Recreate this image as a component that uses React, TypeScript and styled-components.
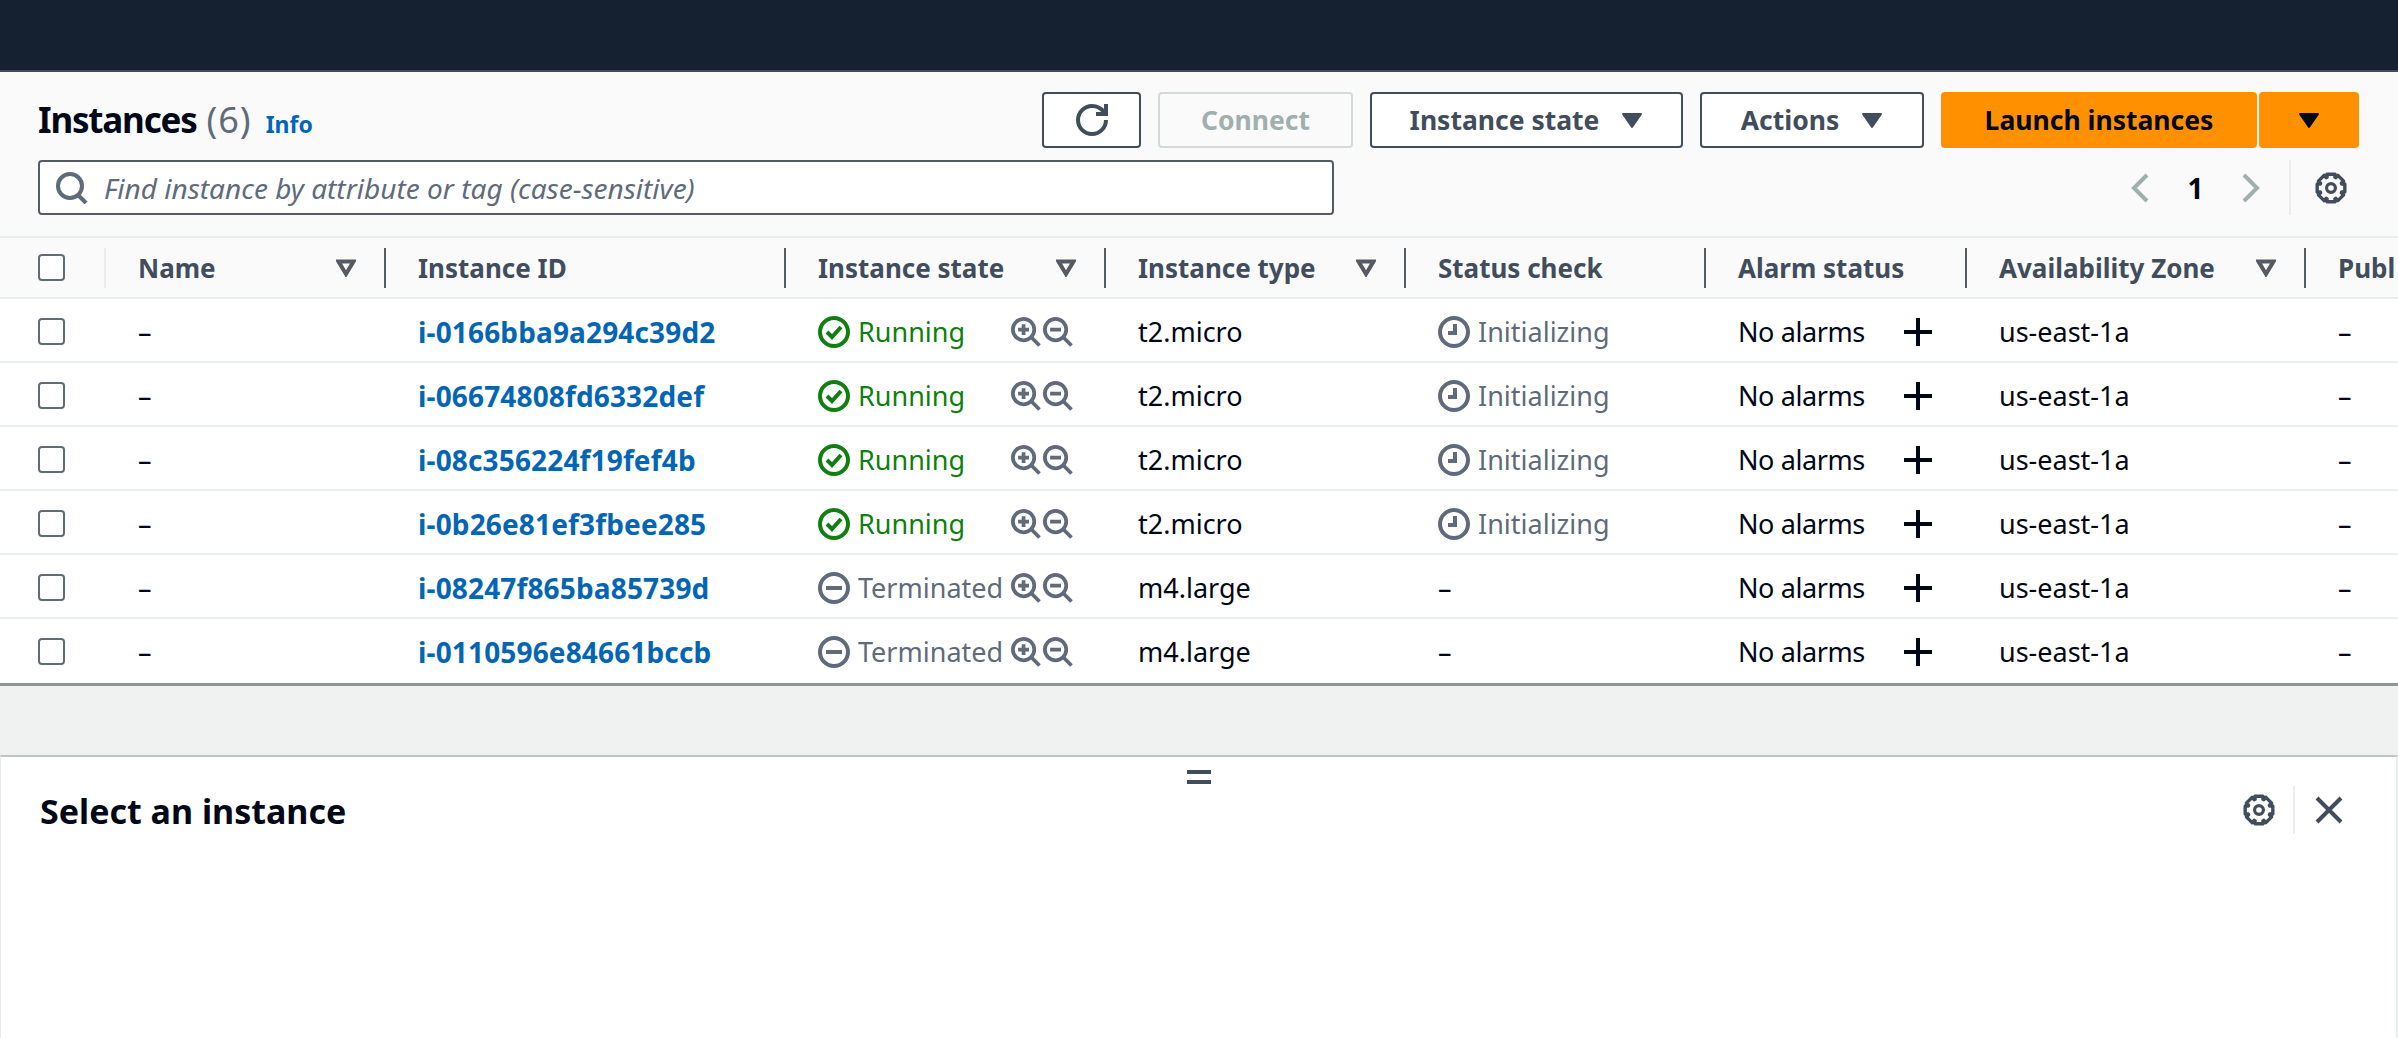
import styled, { createGlobalStyle } from "styled-components";
import { Fragment } from "react";

const GlobalStyle = createGlobalStyle`
  * {
    box-sizing: border-box;
  }
  html,
  body {
    margin: 0;
    padding: 0;
    background: #ffffff;
  }
  body {
    font-family: "Noto Sans", "Open Sans", sans-serif;
    color: #000716;
  }
`;

const COLUMNS = "104px 280px 400px 320px 300px 300px 261px 339px 94px";

const Page = styled.div`
  width: 2398px;
  height: 1038px;
  overflow: hidden;
  display: flex;
  flex-direction: column;
`;

const TopBar = styled.div`
  height: 72px;
  flex: none;
  background: #152131;
  border-bottom: 2px solid #414d5c;
`;

const Header = styled.div`
  height: 166px;
  flex: none;
  background: #fafafa;
  border-bottom: 2px solid #e9eded;
  padding: 20px 38px 0 38px;
  display: flex;
  flex-direction: column;
  gap: 12px;
`;

const HeaderRow = styled.div`
  display: flex;
  align-items: center;
  justify-content: space-between;
  height: 56px;
`;

const TitleGroup = styled.div`
  display: flex;
  align-items: baseline;
  gap: 14px;
`;

const Title = styled.h1`
  margin: 0;
  font-size: 35px;
  line-height: 50px;
  letter-spacing: -1.2px;
  font-weight: 700;
  color: #000716;
`;

const Count = styled.span`
  font-size: 36px;
  letter-spacing: 1px;
  margin-left: 2px;
  font-weight: 400;
  color: #5f6b7a;
`;

const InfoLink = styled.a`
  font-size: 23px;
  font-weight: 700;
  color: #0565b5;
`;

const Actions = styled.div`
  display: flex;
  gap: 17px;
  margin-right: 1px;
`;

const SplitButton = styled.div`
  display: flex;
  gap: 2px;
`;

const Button = styled.button<{ $width: number; $variant?: "primary" | "disabled" }>`
  width: ${(p) => p.$width}px;
  height: 56px;
  padding: 0;
  display: flex;
  align-items: center;
  justify-content: center;
  gap: 22px;
  border-radius: 4px;
  font-family: inherit;
  font-size: 26.5px;
  font-weight: 700;
  background: ${(p) => (p.$variant === "primary" ? "#ff9100" : p.$variant === "disabled" ? "#fafafa" : "#ffffff")};
  color: ${(p) => (p.$variant === "primary" ? "#000716" : p.$variant === "disabled" ? "#9fb0ae" : "#414d5c")};
  border: ${(p) => (p.$variant === "primary" ? "none" : p.$variant === "disabled" ? "2px solid #d3dad8" : "2px solid #414d5c")};
`;

const SearchRow = styled.div`
  display: flex;
  align-items: center;
  justify-content: space-between;
`;

const SearchBox = styled.div`
  width: 1296px;
  height: 55px;
  display: flex;
  align-items: center;
  gap: 16px;
  padding-left: 16px;
  background: #ffffff;
  border: 2px solid #545b64;
  border-radius: 4px;
  font-size: 28px;
  font-style: italic;
  color: #5f6b7a;
`;

const Pagination = styled.div`
  display: flex;
  align-items: center;
  height: 55px;
  margin-right: 13px;
  color: #414d5c;
`;

const PageNumber = styled.span`
  width: 91px;
  text-align: center;
  font-size: 28px;
  font-weight: 700;
  color: #000716;
`;

const PagerDivider = styled.div`
  width: 2px;
  height: 55px;
  background: #e9eded;
  margin: 0 24px 0 28px;
`;

const TableGrid = styled.div`
  flex: none;
  border-bottom: 3px solid #8d9596;
`;

const HeadRow = styled.div`
  display: grid;
  grid-template-columns: ${COLUMNS};
  height: 61px;
  align-items: center;
  background: #fafafa;
  border-bottom: 2px solid #e9eded;
`;

const CheckCell = styled.div`
  padding-left: 38px;
  display: flex;
  align-items: center;
`;

const Checkbox = styled.span`
  display: block;
  width: 27px;
  height: 27px;
  background: #ffffff;
  border: 2px solid #5f6b7a;
  border-radius: 4px;
`;

const HeadCell = styled.div<{ $light?: boolean }>`
  height: 40px;
  display: flex;
  align-items: center;
  justify-content: space-between;
  padding: 0 28px 0 32px;
  border-left: 2px solid ${(p) => (p.$light ? "#e9eded" : "#545b64")};
  font-size: 26px;
  font-weight: 700;
  color: #414d5c;
  white-space: nowrap;
`;

const Row = styled.div<{ $last?: boolean }>`
  display: grid;
  grid-template-columns: ${COLUMNS};
  height: 64px;
  padding-top: 3px;
  align-items: center;
  background: #ffffff;
  border-bottom: 2px solid ${(p) => (p.$last ? "#ffffff" : "#e9eded")};
  font-size: 27px;
  white-space: nowrap;
`;

const Cell = styled.div`
  display: flex;
  align-items: center;
  padding-left: 34px;
  min-width: 0;
`;

const IdLink = styled.a`
  font-size: 28px;
  letter-spacing: 0.15px;
  font-weight: 700;
  color: #0565b5;
`;

const StateGroup = styled.div`
  width: 193px;
  flex: none;
  display: flex;
  align-items: center;
  gap: 8px;
`;

const StateLabel = styled.span<{ $running: boolean }>`
  color: ${(p) => (p.$running ? "#107f0f" : "#5f6b7a")};
`;

const ZoomIcons = styled.div`
  display: flex;
  gap: 2px;
  color: #5f6b7a;
`;

const StatusLabel = styled.span`
  color: #5f6b7a;
  margin-left: 8px;
`;

const AlarmGroup = styled.div`
  width: 196px;
  display: flex;
  align-items: center;
  justify-content: space-between;
  letter-spacing: -0.4px;
`;

const GapArea = styled.div`
  height: 69px;
  flex: none;
  background: #f0f1f1;
`;

const SplitPanel = styled.div`
  flex: 1;
  background: #ffffff;
  border-top: 2px solid #c1c4c4;
  border-left: 1px solid #e9eded;
  border-right: 2px solid #e9eded;
`;

const Handle = styled.div`
  display: flex;
  flex-direction: column;
  align-items: center;
  gap: 6px;
  padding-top: 13px;
`;

const HandleBar = styled.span`
  display: block;
  width: 24px;
  height: 4px;
  background: #414d5c;
`;

const PanelHeader = styled.div`
  display: flex;
  align-items: center;
  justify-content: space-between;
  height: 48px;
  margin-top: 2px;
  padding: 0 51px 0 39px;
`;

const PanelTitle = styled.h2`
  margin: 0;
  padding-top: 2px;
  font-size: 34px;
  font-weight: 700;
  color: #000716;
`;

const PanelTools = styled.div`
  display: flex;
  align-items: center;
  height: 48px;
  color: #414d5c;
`;

const ToolDivider = styled.div`
  width: 2px;
  height: 48px;
  background: #e9eded;
  margin: 0 18px 0 18px;
`;

const Svg = styled.svg<{ $size: number }>`
  display: block;
  flex: none;
  width: ${(p) => p.$size}px;
  height: ${(p) => p.$size}px;
  fill: none;
  stroke: currentColor;
  stroke-width: 2;
`;

function gearPath() {
  const pts: string[] = [];
  const teeth = 8;
  for (let i = 0; i < teeth; i++) {
    const a = (i * Math.PI * 2) / teeth - Math.PI / 2;
    const w = Math.PI / 11;
    const v = Math.PI / 9;
    [
      [a - v, 5.7],
      [a - w, 7.2],
      [a + w, 7.2],
      [a + v, 5.7],
    ].forEach(([ang, r]) => {
      pts.push(`${(8 + r * Math.cos(ang)).toFixed(2)} ${(8 + r * Math.sin(ang)).toFixed(2)}`);
    });
  }
  return "M" + pts.join("L") + "Z";
}

const Gear = () => (
  <Svg $size={32} viewBox="0 0 16 16" strokeLinejoin="round">
    <path d={gearPath()} strokeWidth="1.7" />
    <circle cx="8" cy="8" r="2.2" strokeWidth="1.6" />
  </Svg>
);

const Caret = ({ color }: { color: string }) => (
  <svg width="22" height="17" viewBox="0 0 22 17" style={{ display: "block", flex: "none" }}>
    <path d="M2 2h18l-9 13z" fill={color} stroke={color} strokeWidth="2" strokeLinejoin="round" />
  </svg>
);

const SortIcon = () => (
  <svg width="20" height="18" viewBox="0 0 20 18" style={{ display: "block", flex: "none" }}>
    <path d="M2.5 2.5h15L10 15z" fill="none" stroke="#545b64" strokeWidth="4" strokeLinejoin="miter" />
  </svg>
);

const Refresh = () => (
  <Svg $size={32} viewBox="0 0 16 16" style={{ color: "#414d5c" }}>
    <path d="M15 8c0 3.87-3.13 7-7 7s-7-3.13-7-7 3.13-7 7-7c2.79 0 4.6 1.2 6 3" />
    <path d="M15 0v5h-5" />
  </Svg>
);

const SearchIcon = () => (
  <Svg $size={32} viewBox="0 0 16 16" style={{ color: "#5f6b7a" }}>
    <circle cx="7" cy="7" r="6" />
    <path d="M11 11.5l4 4" />
  </Svg>
);

const ZoomIn = () => (
  <Svg $size={30} viewBox="0 0 16 16">
    <circle cx="6.7" cy="6.7" r="5.7" />
    <path d="M10.8 10.8l4.4 4.4M3.8 6.7h5.8M6.7 3.8v5.8" />
  </Svg>
);

const ZoomOut = () => (
  <Svg $size={30} viewBox="0 0 16 16">
    <circle cx="6.7" cy="6.7" r="5.7" />
    <path d="M10.8 10.8l4.4 4.4M3.8 6.7h5.8" />
  </Svg>
);

const RunningIcon = () => (
  <Svg $size={32} viewBox="0 0 16 16" style={{ color: "#107f0f" }}>
    <circle cx="8" cy="8" r="7" />
    <path d="M4.5 8l2.5 2.5 4.5-5" />
  </Svg>
);

const StoppedIcon = () => (
  <Svg $size={32} viewBox="0 0 16 16" style={{ color: "#5f6b7a" }}>
    <circle cx="8" cy="8" r="7" />
    <path d="M4 8h8" />
  </Svg>
);

const ClockIcon = () => (
  <Svg $size={32} viewBox="0 0 16 16" style={{ color: "#5f6b7a" }}>
    <circle cx="8" cy="8" r="7" />
    <path d="M8.5 4v4.5H5" />
  </Svg>
);

const Plus = () => (
  <Svg $size={32} viewBox="0 0 16 16" style={{ color: "#000716" }}>
    <path d="M1 8h14M8 1v14" />
  </Svg>
);

const Chevron = ({ dir }: { dir: "left" | "right" }) => (
  <svg width="20" height="30" viewBox="0 0 20 30" style={{ display: "block", flex: "none" }}>
    <path
      d={dir === "left" ? "M17 2L4 15l13 13" : "M3 2l13 13L3 28"}
      fill="none"
      stroke="#9fb0ae"
      strokeWidth="4"
    />
  </svg>
);

const Close = () => (
  <Svg $size={32} viewBox="0 0 16 16">
    <path d="M2 2l12 12M14 2L2 14" />
  </Svg>
);

const heads = [
  { label: "Name", sort: true, light: true },
  { label: "Instance ID" },
  { label: "Instance state", sort: true },
  { label: "Instance type", sort: true },
  { label: "Status check" },
  { label: "Alarm status" },
  { label: "Availability Zone", sort: true },
  { label: "Publ" },
];

const instances = [
  { id: "i-0166bba9a294c39d2", running: true, type: "t2.micro" },
  { id: "i-06674808fd6332def", running: true, type: "t2.micro" },
  { id: "i-08c356224f19fef4b", running: true, type: "t2.micro" },
  { id: "i-0b26e81ef3fbee285", running: true, type: "t2.micro" },
  { id: "i-08247f865ba85739d", running: false, type: "m4.large" },
  { id: "i-0110596e84661bccb", running: false, type: "m4.large" },
];

export default function App() {
  return (
    <Page>
      <GlobalStyle />
      <TopBar />
      <Header>
        <HeaderRow>
          <TitleGroup>
            <Title>
              Instances <Count>(6)</Count>
            </Title>
            <InfoLink>Info</InfoLink>
          </TitleGroup>
          <Actions>
            <Button $width={99}>
              <Refresh />
            </Button>
            <Button $width={195} $variant="disabled">
              Connect
            </Button>
            <Button $width={313}>
              Instance state <Caret color="#414d5c" />
            </Button>
            <Button $width={224}>
              Actions <Caret color="#414d5c" />
            </Button>
            <SplitButton>
              <Button $width={316} $variant="primary">
                Launch instances
              </Button>
              <Button $width={100} $variant="primary">
                <Caret color="#000716" />
              </Button>
            </SplitButton>
          </Actions>
        </HeaderRow>
        <SearchRow>
          <SearchBox>
            <SearchIcon />
            Find instance by attribute or tag (case-sensitive)
          </SearchBox>
          <Pagination>
            <Chevron dir="left" />
            <PageNumber>1</PageNumber>
            <Chevron dir="right" />
            <PagerDivider />
            <Gear />
          </Pagination>
        </SearchRow>
      </Header>
      <TableGrid>
        <HeadRow>
          <CheckCell>
            <Checkbox />
          </CheckCell>
          {heads.map((h) => (
            <HeadCell key={h.label} $light={h.light}>
              {h.label}
              {h.sort && <SortIcon />}
            </HeadCell>
          ))}
        </HeadRow>
        {instances.map((inst, i) => (
          <Row key={inst.id} $last={i === instances.length - 1}>
            <CheckCell>
              <Checkbox />
            </CheckCell>
            <Cell>–</Cell>
            <Cell>
              <IdLink>{inst.id}</IdLink>
            </Cell>
            <Cell>
              <StateGroup>
                {inst.running ? <RunningIcon /> : <StoppedIcon />}
                <StateLabel $running={inst.running}>{inst.running ? "Running" : "Terminated"}</StateLabel>
              </StateGroup>
              <ZoomIcons>
                <ZoomIn />
                <ZoomOut />
              </ZoomIcons>
            </Cell>
            <Cell>{inst.type}</Cell>
            <Cell>
              {inst.running ? (
                <Fragment>
                  <ClockIcon />
                  <StatusLabel>Initializing</StatusLabel>
                </Fragment>
              ) : (
                "–"
              )}
            </Cell>
            <Cell>
              <AlarmGroup>
                No alarms
                <Plus />
              </AlarmGroup>
            </Cell>
            <Cell>us-east-1a</Cell>
            <Cell>–</Cell>
          </Row>
        ))}
      </TableGrid>
      <GapArea />
      <SplitPanel>
        <Handle>
          <HandleBar />
          <HandleBar />
        </Handle>
        <PanelHeader>
          <PanelTitle>Select an instance</PanelTitle>
          <PanelTools>
            <Gear />
            <ToolDivider />
            <Close />
          </PanelTools>
        </PanelHeader>
      </SplitPanel>
    </Page>
  );
}
